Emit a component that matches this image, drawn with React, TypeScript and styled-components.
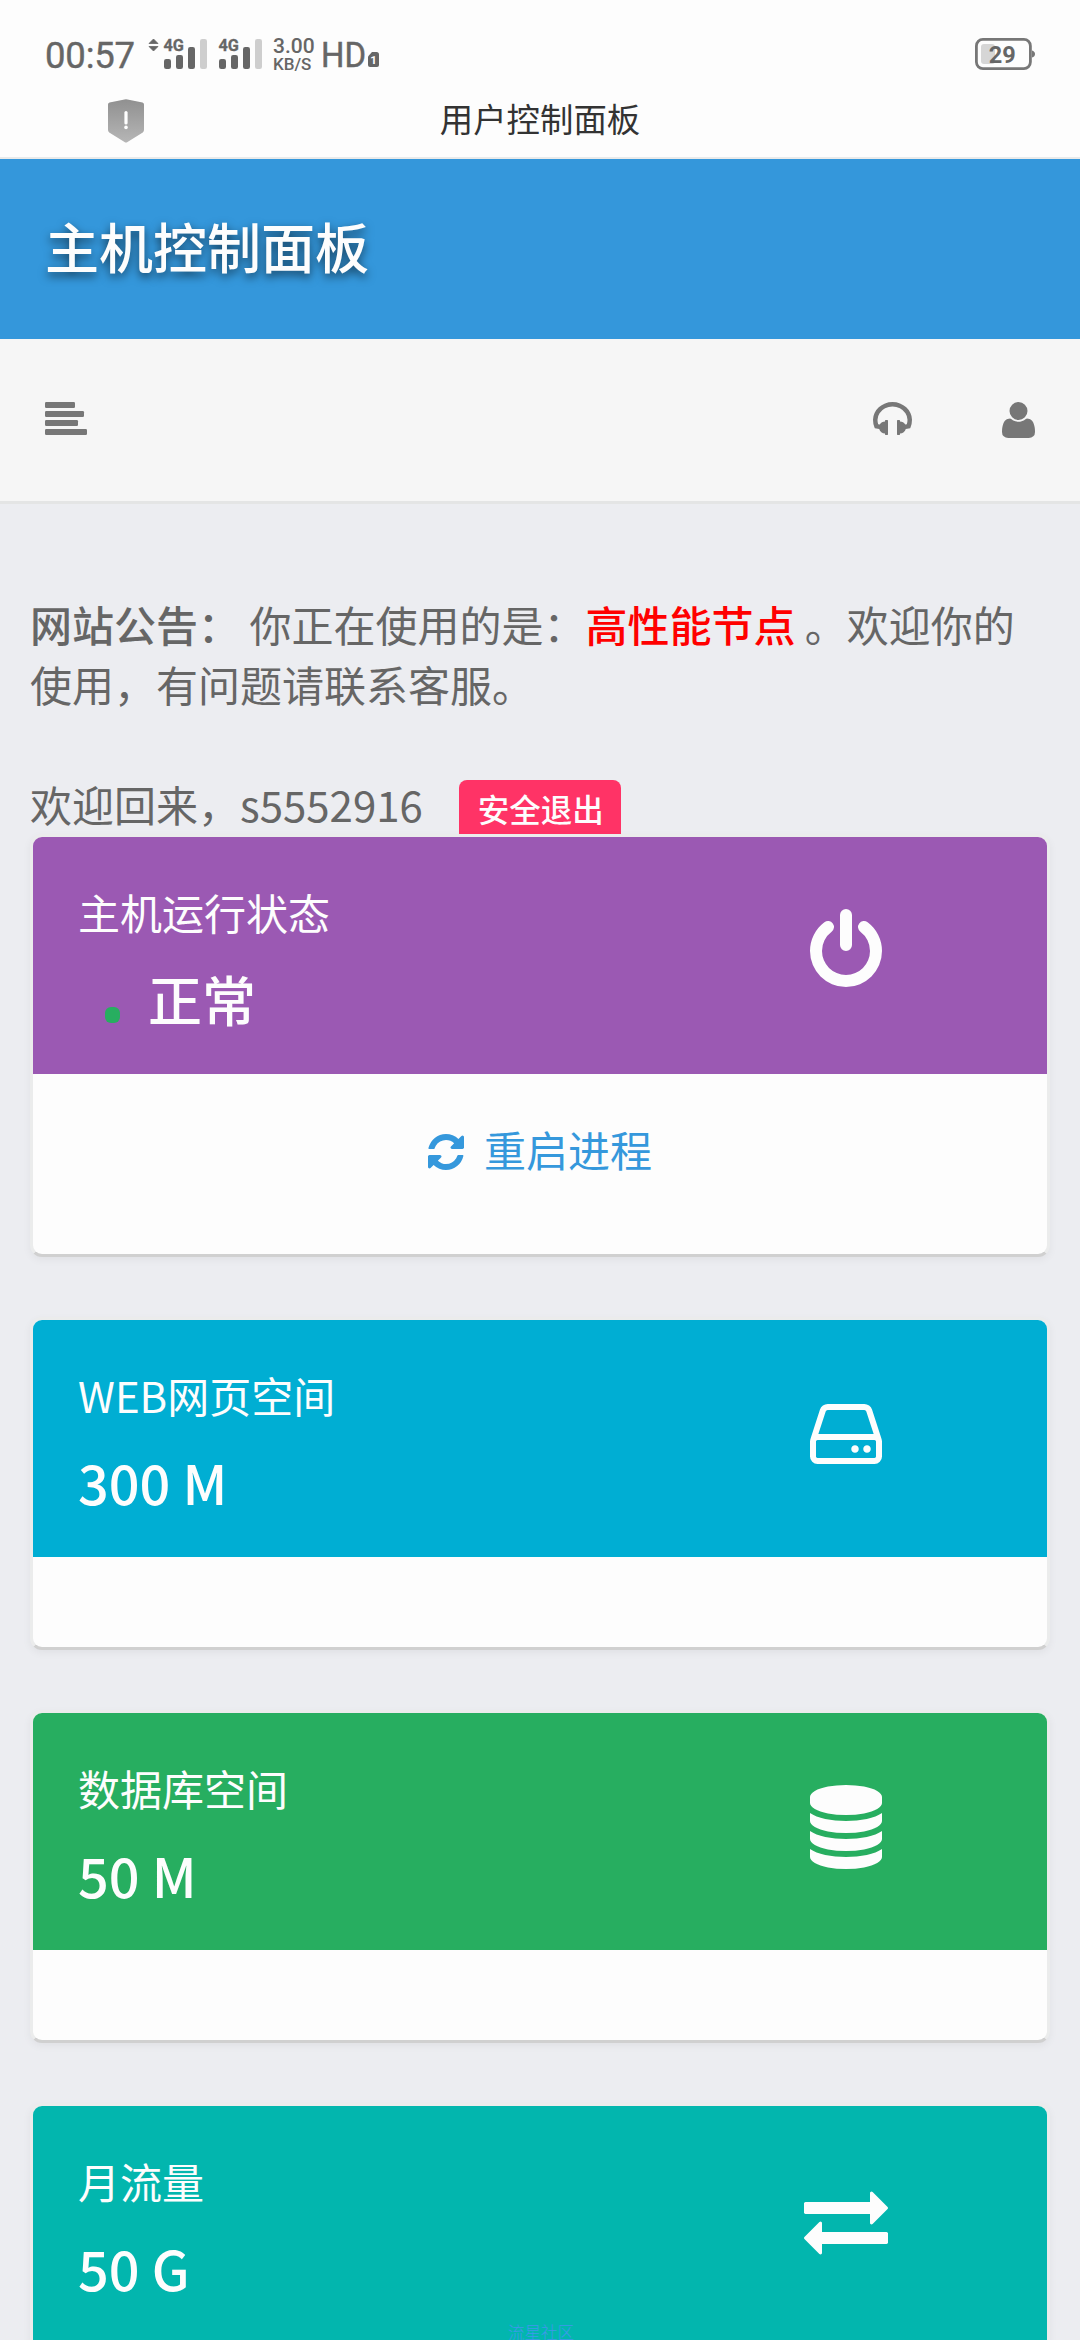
import React from "react";
import styled, { createGlobalStyle } from "styled-components";

const GlobalStyle = createGlobalStyle`
  *, *::before, *::after { box-sizing: border-box; }
  html, body { margin: 0; padding: 0; background: #ecedf1; }
  body { font-family: "Noto Sans CJK SC", "Noto Sans", sans-serif; color: #666; }
  svg { display: block; flex: none; }
`;

const Screen = styled.div`
  position: relative;
  width: 1080px;
  height: 2340px;
  overflow: hidden;
  display: flex;
  flex-direction: column;
  background: #ecedf1;
`;

const SystemHeader = styled.div`
  flex: none;
  height: 159px;
  background: #fdfdfd;
  border-bottom: 2px solid #e9eaea;
`;

const StatusBar = styled.div`
  display: flex;
  align-items: flex-start;
  height: 84px;
  padding: 32px 45px 0;
  font-family: Roboto, sans-serif;
  color: #666;
`;

const Clock = styled.span`
  flex: none;
  width: 101px;
  padding-top: 1px;
  font-size: 36.5px;
  line-height: 46px;
  letter-spacing: -0.2px;
  -webkit-text-stroke: 0.4px #666;
`;

const NetSpeed = styled.div`
  flex: none;
  display: flex;
  flex-direction: column;
  width: 59px;
  padding: 5px 0 0 9px;
  font-weight: 500;
  white-space: nowrap;
`;

const SpeedValue = styled.span`
  font-size: 21px;
  line-height: 18px;
`;

const SpeedUnit = styled.span`
  font-size: 17px;
  line-height: 18px;
`;

const BatterySlot = styled.div`
  margin-left: auto;
  padding-top: 6px;
`;

const TitleRow = styled.div`
  display: grid;
  grid-template-columns: 1fr auto 1fr;
  align-items: center;
  height: 73px;
  padding: 0 0 0 108px;
`;

const PageTitle = styled.span`
  margin-left: -108px;
  padding-bottom: 6px;
  font-size: 33.4px;
  line-height: 48px;
  color: #333;
`;

const Brand = styled.header`
  flex: none;
  display: flex;
  align-items: center;
  height: 180px;
  padding: 0 45px 6px;
  background: #3497db;
`;

const BrandName = styled.h1`
  margin: 0;
  font-size: 54px;
  font-weight: 500;
  line-height: 80px;
  color: #fdfdfd;
  text-shadow: 0 4px 10px rgba(0, 0, 0, 0.6);
`;

const Nav = styled.nav`
  flex: none;
  display: flex;
  align-items: flex-start;
  height: 165px;
  padding: 63px 45px 0;
  background: #f6f6f6;
  border-bottom: 3px solid #e4e5e5;
  color: #777;
`;

const NavActions = styled.div`
  display: flex;
  gap: 90px;
  margin-left: auto;
`;

const Content = styled.main`
  flex: none;
  display: flex;
  flex-direction: column;
  padding: 90px 30px 0;
`;

const Notice = styled.p`
  margin: 0 0 60px;
  font-size: 42px;
  line-height: 60px;
`;

const Strong = styled.b`
  font-weight: 500;
`;

const Highlight = styled(Strong)`
  color: #ff0000;
`;

const Welcome = styled.div`
  display: flex;
  height: 60px;
  gap: 36px;
  font-size: 42px;
  line-height: 60px;
  white-space: nowrap;
`;

const LogoutButton = styled.a`
  height: 54px;
  margin-top: 6px;
  padding: 0 17px 0 19px;
  border-radius: 8px 8px 0 0;
  background: #ff3366;
  color: #fdfdfd;
  font-size: 31.5px;
  font-weight: 500;
  line-height: 56px;
`;

const CardList = styled.div`
  display: flex;
  flex-direction: column;
  gap: 60px;
`;

const Card = styled.section`
  border: 3px solid #ebecec;
  border-bottom-color: #d0d0d0;
  border-radius: 12px;
  background: #fdfdfd;
  box-shadow: 0 3px 9px rgba(0, 0, 0, 0.05);
  overflow: hidden;
`;

const CardHead = styled.div<{ $color: string }>`
  display: flex;
  justify-content: space-between;
  height: 237px;
  padding: 43px 159px 0 45px;
  background: ${(p) => p.$color};
  color: #fdfdfd;
`;

const CardLabel = styled.div`
  font-size: 42px;
  line-height: 63px;
`;

const CardValue = styled.div`
  display: flex;
  align-items: center;
  height: 80px;
  margin-top: 16px;
  font-size: 54px;
  font-weight: 500;
  line-height: 80px;
`;

const StatusDot = styled.span`
  width: 15px;
  height: 16px;
  margin: 32px 28px 0 27px;
  border-radius: 6px;
  background: #27ae60;
`;

const CardIcon = styled.div`
  padding-top: 29px;
`;

const CardFoot = styled.div<{ $tall?: boolean }>`
  display: flex;
  justify-content: center;
  height: ${(p) => (p.$tall ? 180 : 90)}px;
  padding-top: 45px;
`;

const RestartLink = styled.a`
  display: flex;
  align-items: center;
  gap: 20px;
  height: 66px;
  color: #3598dc;
`;

const RestartText = styled.span`
  padding-bottom: 6px;
  font-size: 42px;
  line-height: 60px;
`;

const Watermark = styled.span`
  position: absolute;
  left: 508px;
  top: 2324px;
  font-size: 16.5px;
  font-weight: 300;
  line-height: 16px;
  color: #3f98ec;
`;

const PATHS = {
  headphones:
    "M1728 886q0 166-60 314l-20 49-185 33q-22 83-90.5 136.5t-156.5 53.5v32q0 14-9 23t-23 9h-64q-14 0-23-9t-9-23v-576q0-14 9-23t23-9h64q14 0 23 9t9 23v32q71 0 130 35.5t93 95.5l68-12q29-95 29-193 0-148-88-279t-236.5-209-315.5-78-315.5 78-236.5 209-88 279q0 98 29 193l68 12q34-60 93-95.5t130-35.5v-32q0-14 9-23t23-9h64q14 0 23 9t9 23v576q0 14-9 23t-23 9h-64q-14 0-23-9t-9-23v-32q-88 0-156.5-53.5t-90.5-136.5l-185-33-20-49q-60-148-60-314 0-151 67-291t179-242.5 266-163.5 320-61 320 61 266 163.5 179 242.5 67 291z",
  user: "M1600 1405q0 120-73 189.5t-194 69.5h-874q-121 0-194-69.5t-73-189.5q0-53 3.5-103.5t14-109 26.5-108.5 43-97.5 62-81 85.5-53.5 111.5-20q9 0 42 21.5t74.5 48 108 48 133.5 21.5 133.5-21.5 108-48 74.5-48 42-21.5q61 0 111.5 20t85.5 53.5 62 81 43 97.5 26.5 108.5 14 109 3.5 103.5zm-320-893q0 159-112.5 271.5t-271.5 112.5-271.5-112.5-112.5-271.5 112.5-271.5 271.5-112.5 271.5 112.5 112.5 271.5z",
  power:
    "M1664 896q0 156-61 298t-164 245-245 164-298 61-298-61-245-164-164-245-61-298q0-182 80.5-343t226.5-270q43-32 95.5-25t83.5 50q32 42 24.5 94.5t-49.5 84.5q-98 74-151.5 181t-53.5 228q0 104 40.5 198.5t109.5 163.5 163.5 109.5 198.5 40.5 198.5-40.5 163.5-109.5 109.5-163.5 40.5-198.5q0-121-53.5-228t-151.5-181q-42-32-49.5-84.5t24.5-94.5q31-43 84-50t95 25q146 109 226.5 270t80.5 343zm-640-768v640q0 52-38 90t-90 38-90-38-38-90v-640q0-52 38-90t90-38 90 38 38 90z",
  refresh:
    "M1639 1056q0 5-1 7-64 268-268 434.5t-478 166.5q-146 0-282.5-55t-243.5-157l-129 129q-19 19-45 19t-45-19-19-45v-448q0-26 19-45t45-19h448q26 0 45 19t19 45-19 45l-137 137q71 66 161 102t187 36q134 0 250-65t186-179q11-17 53-117 8-23 30-23h192q13 0 22.5 9.5t9.5 22.5zm25-800v448q0 26-19 45t-45 19h-448q-26 0-45-19t-19-45 19-45l138-138q-148-137-349-137-134 0-250 65t-186 179q-11 17-53 117-8 23-30 23h-199q-13 0-22.5-9.5t-9.5-22.5v-7q65-268 270-434.5t480-166.5q146 0 284 55.5t245 156.5l130-129q19-19 45-19t45 19 19 45z",
  hdd: "M1168 1216q0 33-23.5 56.5t-56.5 23.5-56.5-23.5-23.5-56.5 23.5-56.5 56.5-23.5 56.5 23.5 23.5 56.5zm256 0q0 33-23.5 56.5t-56.5 23.5-56.5-23.5-23.5-56.5 23.5-56.5 56.5-23.5 56.5 23.5 23.5 56.5zm112 160v-320q0-13-9.5-22.5t-22.5-9.5h-1216q-13 0-22.5 9.5t-9.5 22.5v320q0 13 9.5 22.5t22.5 9.5h1216q13 0 22.5-9.5t9.5-22.5zm-1230-480h1180l-157-482q-4-13-16-21.5t-26-8.5h-782q-14 0-26 8.5t-16 21.5zm1358 160v320q0 66-47 113t-113 47h-1216q-66 0-113-47t-47-113v-320q0-25 16-75l197-606q17-53 63-86t101-33h782q55 0 101 33t63 86l197 606q16 50 16 75z",
  database:
    "M896 768q237 0 443-43t325-127v170q0 69-103 128t-280 93.5-385 34.5-385-34.5-280-93.5-103-128v-170q119 84 325 127t443 43zm0 768q237 0 443-43t325-127v170q0 69-103 128t-280 93.5-385 34.5-385-34.5-280-93.5-103-128v-170q119 84 325 127t443 43zm0-384q237 0 443-43t325-127v170q0 69-103 128t-280 93.5-385 34.5-385-34.5-280-93.5-103-128v-170q119 84 325 127t443 43zm0-1152q208 0 385 34.5t280 93.5 103 128v128q0 69-103 128t-280 93.5-385 34.5-385-34.5-280-93.5-103-128v-128q0-69 103-128t280-93.5 385-34.5z",
  exchange:
    "M1792 1184v192q0 13-9.5 22.5t-22.5 9.5h-1376v192q0 13-9.5 22.5t-22.5 9.5q-12 0-24-10l-319-320q-9-9-9-22 0-14 9-23l320-320q9-9 23-9 13 0 22.5 9.5t9.5 22.5v192h1376q13 0 22.5 9.5t9.5 22.5zm0-544q0 14-9 23l-320 320q-9 9-23 9-13 0-22.5-9.5t-9.5-22.5v-192h-1376q-13 0-22.5-9.5t-9.5-22.5v-192q0-13 9.5-22.5t22.5-9.5h1376v-192q0-14 9-23t23-9q12 0 24 10l319 319q9 9 9 23z",
};

type IconProps = { name: keyof typeof PATHS; width: number; height: number; viewBox?: string };

const Icon = ({ name, width, height, viewBox = "0 0 1792 1792" }: IconProps) => (
  <svg width={width} height={height} viewBox={viewBox} fill="currentColor" aria-hidden="true">
    <path d={PATHS[name]} />
  </svg>
);

const Signal = ({ activity }: { activity?: boolean }) => (
  <svg width={activity ? 63 : 55} height="40" viewBox={activity ? "-18 0 63 40" : "-10 0 55 40"} fill="#666">
    {activity && (
      <g>
        <path d="M-15 11.5 L-10.5 7 L-6 11.5Z" stroke="#666" strokeWidth="0.8" strokeLinejoin="round" />
        <path d="M-15 14.5 L-10.5 19 L-6 14.5Z" stroke="#666" strokeWidth="0.8" strokeLinejoin="round" />
      </g>
    )}
    <text
      x="-0.5"
      y="19"
      fontSize="17"
      fontWeight="700"
      textLength="20.5"
      lengthAdjust="spacingAndGlyphs"
      stroke="#666"
      strokeWidth="0.3"
    >
      4G
    </text>
    <rect x="0" y="27" width="7" height="10" rx="2.2" />
    <rect x="12" y="23" width="7" height="14" rx="2.2" />
    <rect x="24" y="15" width="7" height="22" rx="2.2" />
    <rect x="36" y="7" width="7" height="30" rx="2.2" fill="#cecece" />
  </svg>
);

const HdVoice = () => (
  <svg width="60" height="40" viewBox="0 0 60 40" fill="#666">
    <text
      x="-2"
      y="35"
      fontSize="35.5"
      textLength="45"
      lengthAdjust="spacingAndGlyphs"
      stroke="#666"
      strokeWidth="0.5"
    >
      HD
    </text>
    <path d="M49 20h4.500q2.500 0 2.500 2.500V33q0 2-2 2h-7q-2 0-2-2v-8.500Z" />
    <text x="47.200" y="32" fontSize="11.500" fontWeight="700" fill="#fdfdfd">
      1
    </text>
  </svg>
);

const Battery = () => (
  <svg width="60" height="32" viewBox="0 0 60 32">
    <rect x="6" y="6" width="14" height="20" rx="3" fill="#d6d6d6" />
    <rect x="1.400" y="1.400" width="54" height="29.200" rx="6.500" fill="none" stroke="#777" strokeWidth="2.800" />
    <path d="M57 12.500q3 1 3 3.500t-3 3.500Z" fill="#777" />
    <text x="13.800" y="24.600" fontSize="24.500" fontWeight="700" fill="#666" textLength="27" lengthAdjust="spacingAndGlyphs">
      29
    </text>
  </svg>
);

const Shield = () => (
  <svg width="36" height="44" viewBox="0 0 36 44">
    <defs>
      <linearGradient id="shield" x1="0" y1="0" x2="0" y2="1">
        <stop offset="0" stopColor="#909090" />
        <stop offset="1" stopColor="#b6b6b6" />
      </linearGradient>
    </defs>
    <path
      d="M16.500 .4Q18 0 19.500 .4L34.500 3.600Q36 4 36 5.500V31Q36 32.500 34.800 33.400L19.500 43Q18 44 16.500 43L1.200 33.400Q0 32.500 0 31V5.500Q0 4 1.500 3.600Z"
      fill="url(#shield)"
    />
    <rect x="16.400" y="12" width="3.200" height="13.500" rx="1.600" fill="#fff" />
    <circle cx="18" cy="28.400" r="1.800" fill="#fff" />
  </svg>
);

const MenuIcon = () => (
  <svg width="42" height="33" viewBox="0 0 42 33" fill="#777">
    <rect width="30" height="6" rx="1.200" />
    <rect y="9" width="39" height="6" rx="1.200" />
    <rect y="18" width="33" height="6" rx="1.200" />
    <rect y="27" width="42" height="6" rx="1.200" />
  </svg>
);

type CardData = {
  label: string;
  value: string;
  color: string;
  icon: keyof typeof PATHS;
  running?: boolean;
  action?: string;
};

const CARDS: CardData[] = [
  { label: "主机运行状态", value: "正常", color: "#9b59b3", icon: "power", running: true, action: "重启进程" },
  { label: "WEB网页空间", value: "300 M", color: "#00aed3", icon: "hdd" },
  { label: "数据库空间", value: "50 M", color: "#27ae60", icon: "database" },
  { label: "月流量", value: "50 G", color: "#02b6ae", icon: "exchange" },
];

const StatCard = ({ label, value, color, icon, running, action }: CardData) => (
  <Card>
    <CardHead $color={color}>
      <div>
        <CardLabel>{label}</CardLabel>
        <CardValue>
          {running && <StatusDot />}
          {value}
        </CardValue>
      </div>
      <CardIcon>
        <Icon name={icon} width={84} height={84} />
      </CardIcon>
    </CardHead>
    <CardFoot $tall={Boolean(action)}>
      {action && (
        <RestartLink>
          <Icon name="refresh" width={36} height={36} viewBox="128 128 1536 1536" />
          <RestartText>{action}</RestartText>
        </RestartLink>
      )}
    </CardFoot>
  </Card>
);

export default function App() {
  return (
    <Screen>
      <GlobalStyle />
      <SystemHeader>
        <StatusBar>
          <Clock>00:57</Clock>
          <Signal activity />
          <Signal />
          <NetSpeed>
            <SpeedValue>3.00</SpeedValue>
            <SpeedUnit>KB/S</SpeedUnit>
          </NetSpeed>
          <HdVoice />
          <BatterySlot>
            <Battery />
          </BatterySlot>
        </StatusBar>
        <TitleRow>
          <Shield />
          <PageTitle>用户控制面板</PageTitle>
        </TitleRow>
      </SystemHeader>

      <Brand>
        <BrandName>主机控制面板</BrandName>
      </Brand>

      <Nav>
        <MenuIcon />
        <NavActions>
          <Icon name="headphones" width={39} height={33} viewBox="64 128 1664 1408" />
          <Icon name="user" width={33} height={36} viewBox="192 128 1408 1536" />
        </NavActions>
      </Nav>

      <Content>
        <Notice>
          <Strong>网站公告：</Strong> 你正在使用的是：<Highlight>高性能节点</Highlight> 。欢迎你的使用，有问题请联系客服。
        </Notice>
        <Welcome>
          <span>欢迎回来，s5552916</span>
          <LogoutButton>安全退出</LogoutButton>
        </Welcome>
        <CardList>
          {CARDS.map((card) => (
            <StatCard key={card.label} {...card} />
          ))}
        </CardList>
      </Content>

      <Watermark>流星社区</Watermark>
    </Screen>
  );
}
